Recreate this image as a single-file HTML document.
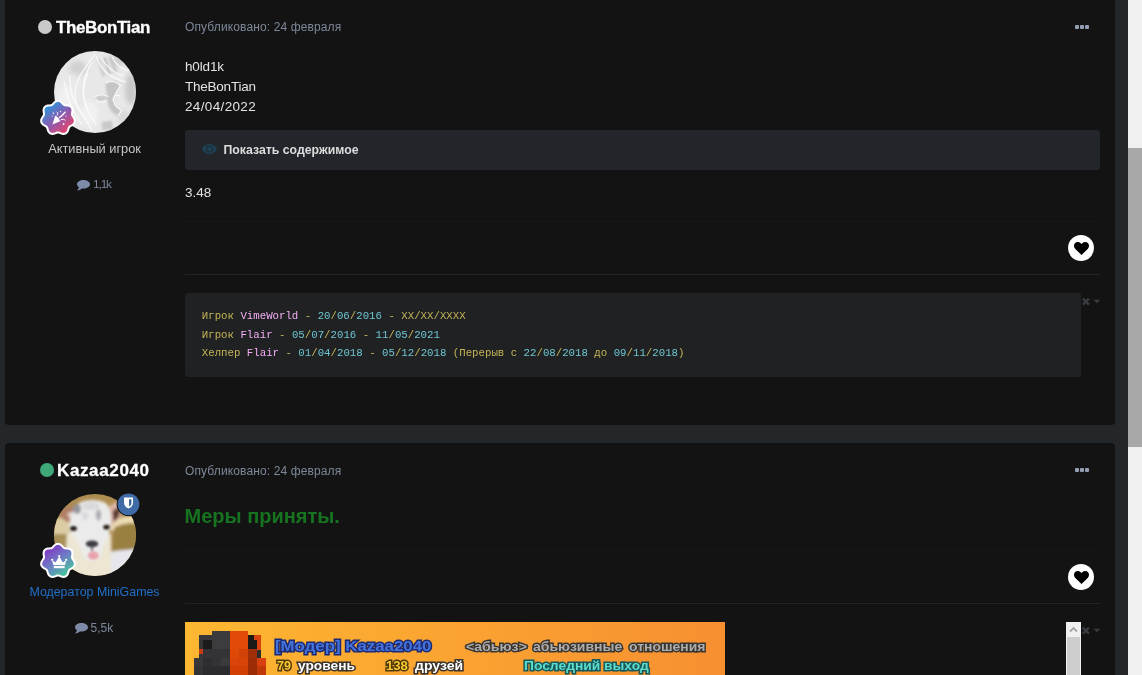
<!DOCTYPE html>
<html lang="ru">
<head>
<meta charset="utf-8">
<title>Forum</title>
<style>
*{box-sizing:border-box;margin:0;padding:0}
html,body{width:1142px;height:675px;overflow:hidden;background:#23272a;font-family:"Liberation Sans",sans-serif;color:#e0e0e0}
#root{position:absolute;left:0;top:0;width:1142px;height:675px;overflow:hidden;will-change:transform}
.abs{position:absolute}
.panel{position:absolute;left:5px;width:1110px;background:#131313}
#p1{top:-10px;height:435px;border-radius:0 0 4px 4px}
#p2{top:443px;height:260px;border-radius:4px 4px 0 0}
.sbar{position:absolute;left:1128px;top:0;width:14px;height:675px;background:#f0f0f0}
.sbar .thumb{position:absolute;left:0;top:148px;width:14px;height:299px;background:#a8a8a8}
.uname{position:absolute;font-weight:bold;color:#fff;-webkit-text-stroke:.3px #fff;font-size:17px;line-height:20px;white-space:nowrap}
.dot{position:absolute;width:14px;height:14px;border-radius:50%}
.pub{position:absolute;left:185px;letter-spacing:.12px;font-size:12px;line-height:16px;color:#7d8799;white-space:nowrap}
.txt{position:absolute;left:185px;font-size:13.5px;line-height:20px;color:#e2e2e2;white-space:nowrap}
.rank{position:absolute;left:14px;width:160px;text-align:center;font-size:12.8px;line-height:16px;white-space:nowrap}
.cnt{position:absolute;font-size:12px;line-height:14px;color:#7d8799;white-space:nowrap}
.hr{position:absolute;left:185px;width:915px;height:1px;background:#242424}
.heart{position:absolute;left:1068px;width:26px;height:26px;border-radius:50%;background:#fff}
.heart svg{position:absolute;left:5.6px;top:6.8px;width:15px;height:13px}
.dots{position:absolute;left:1075px;width:15px;height:4px}
.dots i{position:absolute;top:0;width:4.2px;height:4.2px;background:#949eb3;border-radius:1px}
.spoiler{position:absolute;left:185px;top:130px;width:915px;height:40px;background:#22262a;border-radius:3px}
.spoiler span{position:absolute;left:38.5px;top:13px;font-size:12.3px;line-height:14px;font-weight:bold;color:#dcdcdc;white-space:nowrap}
.code{position:absolute;left:185px;top:293px;width:896px;height:84px;background:#1f2123;border-radius:3px;font-family:"Liberation Mono",monospace;font-size:10.73px;line-height:18.7px;padding:14px 16.8px;white-space:pre}
.y{color:#c4b556}.p{color:#f5aef5}.c{color:#6fc6d2}
.avatar{position:absolute;width:82px;height:82px;border-radius:50%;overflow:hidden}
.xdd{position:absolute;left:1082px;width:19px;height:8px}
.bn{position:absolute;font-weight:bold;white-space:nowrap;font-size:14px;line-height:16px;-webkit-text-stroke:2.8px #2a2a2a;paint-order:stroke fill}
</style>
</head>
<body>
<div id="root">
<div class="panel" id="p1"></div>
<div class="panel" id="p2"></div>

<!-- POST 1 -->
<div class="dot" style="left:38px;top:20px;background:#c9c9c9"></div>
<div class="uname" style="left:56px;top:18px;letter-spacing:-0.39px">TheBonTian</div>
<div class="pub" style="top:19px">Опубликовано: 24 февраля</div>
<div class="dots" style="top:25px"><i style="left:0"></i><i style="left:5.1px"></i><i style="left:10.2px"></i></div>

<div class="avatar" id="av1" style="left:53.5px;top:51px">
<svg width="82" height="82" viewBox="0 0 82 82">
<defs><filter id="b1" x="-50%" y="-50%" width="200%" height="200%"><feGaussianBlur stdDeviation="1.1"/></filter><filter id="b1b" x="-50%" y="-50%" width="200%" height="200%"><feGaussianBlur stdDeviation="2.6"/></filter></defs>
<rect width="82" height="82" fill="#e8e8e8"/>
<g filter="url(#b1b)">
<ellipse cx="24" cy="17" rx="9" ry="7" fill="#d0d0d0"/>
<ellipse cx="77" cy="38" rx="6" ry="16" fill="#c8c8c8"/>
<ellipse cx="64" cy="10" rx="8" ry="5" fill="#cfcfcf"/>
<ellipse cx="12" cy="50" rx="9" ry="16" fill="#f0f0f0"/>
<ellipse cx="36" cy="62" rx="9" ry="12" fill="#f1f1f1"/>
<ellipse cx="70" cy="66" rx="7" ry="7" fill="#dadada"/>
</g>
<g filter="url(#b1)">
<path d="M51.4 32 L61.5 30.1 L66.5 34.5 L62.7 40.8 L59 48.4 L61.5 54.7 L67.8 59.7 L64 64.700 L57.7 61 L53.9 53.4 L52.7 43.3 Z" fill="#c5c5c5"/>
<path d="M41.5 45.5 Q47 42.5 53.5 45.5 Q50 51 44 50 Z" fill="#cbcbcb"/>
<path d="M47.6 71 L58 69.8 L59 78.6 L48 79 Z" fill="#c9c9c9"/>
<path d="M48.500 7 L51.500 6 L57.500 23 L54.500 24 Z" fill="#c2c2c2"/>
<path d="M54.500 6 L57.500 5.500 L63.500 21 L60.500 22.500 Z" fill="#c6c6c6"/>
<path d="M43 9 L46 8 L51.500 25 L48.500 26 Z" fill="#cccccc"/>
</g>
<g fill="none" stroke="#fcfcfc" stroke-width="1.100" opacity=".95">
<path d="M41 3 C32 16 20 28 21 46 C22 58 32 66 38 80"/>
<path d="M42 5 C46 18 56 27 72 31"/>
<path d="M38 12 C30 24 27 38 31 52 C33 60 38 66 42 74"/>
<path d="M40.500 45.800 Q47 41.800 54.500 45.500 M42 49.500 Q47 52.500 52.500 50"/>
<path d="M60 45.500 Q63 43.500 66 45"/>
<path d="M10 30 C12 46 18 60 28 74"/>
<path d="M47 6 C52 16 60 22 70 25"/>
<path d="M34 22 C29 34 28 46 33 56"/>
<path d="M51.400 32 C56 29 62 30 66.500 34.500 L62.700 40.800 L59 48.400 L61.500 54.700 L67.800 59.700 L64 64.700"/>
<path d="M16 24 C15 40 20 54 30 66"/>
<path d="M58 6 C62 14 68 18 74 20"/>
</g>
</svg>
</div>
<svg class="abs" style="left:40.4px;top:99.6px" width="36" height="36" viewBox="0 0 36 36">
<defs><linearGradient id="g1" x1="0.15" y1="0.1" x2="0.85" y2="0.95"><stop offset="0" stop-color="#2596dc"/><stop offset=".5" stop-color="#8a5cb0"/><stop offset="1" stop-color="#ee4266"/></linearGradient></defs>
<path d="M18.00 1.80 L18.72 1.88 L19.43 2.13 L20.10 2.52 L20.72 3.01 L21.29 3.57 L21.82 4.15 L22.32 4.71 L22.80 5.20 L23.29 5.62 L23.81 5.93 L24.38 6.14 L25.01 6.27 L25.70 6.34 L26.44 6.38 L27.23 6.43 L28.02 6.53 L28.80 6.71 L29.52 6.99 L30.15 7.39 L30.67 7.90 L31.05 8.52 L31.30 9.22 L31.41 9.99 L31.41 10.78 L31.33 11.58 L31.21 12.35 L31.09 13.09 L31.00 13.78 L30.98 14.42 L31.06 15.02 L31.25 15.60 L31.54 16.17 L31.92 16.75 L32.35 17.36 L32.80 18.00 L33.22 18.68 L33.56 19.40 L33.79 20.14 L33.87 20.88 L33.79 21.60 L33.55 22.29 L33.15 22.92 L32.63 23.49 L32.01 23.99 L31.33 24.42 L30.65 24.81 L30.00 25.17 L29.41 25.53 L28.90 25.92 L28.48 26.35 L28.14 26.86 L27.88 27.45 L27.66 28.10 L27.45 28.82 L27.23 29.57 L26.95 30.32 L26.61 31.04 L26.17 31.68 L25.64 32.21 L25.03 32.60 L24.34 32.83 L23.60 32.92 L22.83 32.86 L22.05 32.68 L21.29 32.43 L20.57 32.14 L19.88 31.85 L19.23 31.61 L18.60 31.45 L18.00 31.40 L17.40 31.45 L16.77 31.61 L16.12 31.85 L15.43 32.14 L14.71 32.43 L13.95 32.68 L13.17 32.86 L12.40 32.92 L11.66 32.83 L10.97 32.60 L10.36 32.21 L9.83 31.68 L9.39 31.04 L9.05 30.32 L8.77 29.57 L8.55 28.82 L8.34 28.10 L8.12 27.45 L7.86 26.86 L7.52 26.35 L7.10 25.92 L6.59 25.53 L6.00 25.17 L5.35 24.81 L4.67 24.42 L3.99 23.99 L3.37 23.49 L2.85 22.92 L2.45 22.29 L2.21 21.60 L2.13 20.88 L2.21 20.14 L2.44 19.40 L2.78 18.68 L3.20 18.00 L3.65 17.36 L4.08 16.75 L4.46 16.17 L4.75 15.60 L4.94 15.02 L5.02 14.42 L5.00 13.78 L4.91 13.09 L4.79 12.35 L4.67 11.58 L4.59 10.78 L4.59 9.99 L4.70 9.22 L4.95 8.52 L5.33 7.90 L5.85 7.39 L6.48 6.99 L7.20 6.71 L7.98 6.53 L8.77 6.43 L9.56 6.38 L10.30 6.34 L10.99 6.27 L11.62 6.14 L12.19 5.93 L12.71 5.62 L13.20 5.20 L13.68 4.71 L14.18 4.15 L14.71 3.57 L15.28 3.01 L15.90 2.52 L16.57 2.13 L17.28 1.88 Z" fill="#fff" stroke="#fff" stroke-width="4" stroke-linejoin="round"/><path d="M18.00 1.80 L18.72 1.88 L19.43 2.13 L20.10 2.52 L20.72 3.01 L21.29 3.57 L21.82 4.15 L22.32 4.71 L22.80 5.20 L23.29 5.62 L23.81 5.93 L24.38 6.14 L25.01 6.27 L25.70 6.34 L26.44 6.38 L27.23 6.43 L28.02 6.53 L28.80 6.71 L29.52 6.99 L30.15 7.39 L30.67 7.90 L31.05 8.52 L31.30 9.22 L31.41 9.99 L31.41 10.78 L31.33 11.58 L31.21 12.35 L31.09 13.09 L31.00 13.78 L30.98 14.42 L31.06 15.02 L31.25 15.60 L31.54 16.17 L31.92 16.75 L32.35 17.36 L32.80 18.00 L33.22 18.68 L33.56 19.40 L33.79 20.14 L33.87 20.88 L33.79 21.60 L33.55 22.29 L33.15 22.92 L32.63 23.49 L32.01 23.99 L31.33 24.42 L30.65 24.81 L30.00 25.17 L29.41 25.53 L28.90 25.92 L28.48 26.35 L28.14 26.86 L27.88 27.45 L27.66 28.10 L27.45 28.82 L27.23 29.57 L26.95 30.32 L26.61 31.04 L26.17 31.68 L25.64 32.21 L25.03 32.60 L24.34 32.83 L23.60 32.92 L22.83 32.86 L22.05 32.68 L21.29 32.43 L20.57 32.14 L19.88 31.85 L19.23 31.61 L18.60 31.45 L18.00 31.40 L17.40 31.45 L16.77 31.61 L16.12 31.85 L15.43 32.14 L14.71 32.43 L13.95 32.68 L13.17 32.86 L12.40 32.92 L11.66 32.83 L10.97 32.60 L10.36 32.21 L9.83 31.68 L9.39 31.04 L9.05 30.32 L8.77 29.57 L8.55 28.82 L8.34 28.10 L8.12 27.45 L7.86 26.86 L7.52 26.35 L7.10 25.92 L6.59 25.53 L6.00 25.17 L5.35 24.81 L4.67 24.42 L3.99 23.99 L3.37 23.49 L2.85 22.92 L2.45 22.29 L2.21 21.60 L2.13 20.88 L2.21 20.14 L2.44 19.40 L2.78 18.68 L3.20 18.00 L3.65 17.36 L4.08 16.75 L4.46 16.17 L4.75 15.60 L4.94 15.02 L5.02 14.42 L5.00 13.78 L4.91 13.09 L4.79 12.35 L4.67 11.58 L4.59 10.78 L4.59 9.99 L4.70 9.22 L4.95 8.52 L5.33 7.90 L5.85 7.39 L6.48 6.99 L7.20 6.71 L7.98 6.53 L8.77 6.43 L9.56 6.38 L10.30 6.34 L10.99 6.27 L11.62 6.14 L12.19 5.93 L12.71 5.62 L13.20 5.20 L13.68 4.71 L14.18 4.15 L14.71 3.57 L15.28 3.01 L15.90 2.52 L16.57 2.13 L17.28 1.88 Z" fill="url(#g1)"/>
<g fill="#fff">
<path d="M12.4 24.6 L15.3 15.6 Q18.6 17.2 20.2 21.2 Z"/>
<circle cx="13.4" cy="13.2" r=".8"/><circle cx="12.2" cy="16" r=".6"/><circle cx="23.6" cy="24" r=".9"/><circle cx="26" cy="16" r=".6"/><circle cx="20.4" cy="11.6" r=".7"/>
<path d="M17 15.5 C18.4 14 17.6 12.6 16.6 11.8" fill="none" stroke="#fff" stroke-width="1"/>
<path d="M19 17.6 C22 16.6 23 14 25.6 11.8" fill="none" stroke="#fff" stroke-width="1.3"/>
<path d="M20.6 20 C22.6 18.8 24.4 19.2 25.4 20.6" fill="none" stroke="#fff" stroke-width="1"/>
</g>
</svg>
<div class="rank" style="top:141px;left:14.6px;color:#c6c6c6">Активный игрок</div>
<svg class="abs" style="left:77px;top:179.5px" width="13" height="11" viewBox="0 0 13 11"><path d="M6.5 0 C10.1 0 13 1.9 13 4.3 C13 6.7 10.1 8.6 6.5 8.6 C5.9 8.6 5.4 8.55 4.9 8.45 C3.7 9.6 2.2 10.2 .6 10.4 C.3 10.4 .2 10.1 .4 9.9 C1.2 9.1 1.8 8.2 2 7.3 C.8 6.5 0 5.5 0 4.3 C0 1.9 2.9 0 6.5 0 Z" fill="#7d8aa8"/></svg>
<div class="cnt" style="left:93px;top:177px;letter-spacing:-1.1px;font-size:11.8px">1,1k</div>

<div class="txt" style="top:56.5px;letter-spacing:-.15px">h0ld1k</div>
<div class="txt" style="top:76.5px;letter-spacing:-.23px">TheBonTian</div>
<div class="txt" style="top:96.5px;letter-spacing:.35px">24/04/2022</div>
<div class="spoiler">
<svg class="abs" style="left:17.2px;top:14.4px" width="15" height="10" viewBox="0 0 15 10"><path d="M7.5 0 C11 0 13.8 2.4 15 5 C13.8 7.6 11 10 7.5 10 C4 10 1.200 7.600 0 5 C1.200 2.400 4 0 7.500 0 Z M7.500 1.500 A3.500 3.500 0 1 0 7.500 8.500 A3.500 3.500 0 1 0 7.500 1.500 Z" fill="#1d4256" fill-rule="evenodd"/><circle cx="7.500" cy="5" r="2.500" fill="#1d4256"/></svg>
<span>Показать содержимое</span></div>
<div class="txt" style="top:182.5px">3.48</div>
<div class="heart" style="top:235px"><svg viewBox="0 0 15 13"><path d="M7.500 13 L1.300 6.900 C-.4 5.200 -.4 2.600 1.100 1.100 C2.700 -.4 5.200 -.3 6.700 1.300 L7.500 2.100 L8.300 1.300 C9.800 -.3 12.300 -.4 13.900 1.100 C15.400 2.600 15.400 5.200 13.700 6.900 Z" fill="#000"/></svg></div>
<div class="hr" style="top:221px;background:#171717"></div>
<div class="hr" style="top:274px"></div>
<div class="code"><span class="y">Игрок</span> <span class="p">VimeWorld</span> <span class="y">-</span> <span class="c">20</span><span class="y">/</span><span class="c">06</span><span class="y">/</span><span class="c">2016</span> <span class="y">-</span> <span class="y">XX/XX/XXXX</span>
<span class="y">Игрок</span> <span class="p">Flair</span> <span class="y">-</span> <span class="c">05</span><span class="y">/</span><span class="c">07</span><span class="y">/</span><span class="c">2016</span> <span class="y">-</span> <span class="c">11</span><span class="y">/</span><span class="c">05</span><span class="y">/</span><span class="c">2021</span>
<span class="y">Хелпер</span> <span class="p">Flair</span> <span class="y">-</span> <span class="c">01</span><span class="y">/</span><span class="c">04</span><span class="y">/</span><span class="c">2018</span> <span class="y">-</span> <span class="c">05</span><span class="y">/</span><span class="c">12</span><span class="y">/</span><span class="c">2018</span> <span class="y">(Перерыв с</span> <span class="c">22</span><span class="y">/</span><span class="c">08</span><span class="y">/</span><span class="c">2018</span> <span class="y">до</span> <span class="c">09</span><span class="y">/</span><span class="c">11</span><span class="y">/</span><span class="c">2018</span><span class="y">)</span></div>
<svg class="xdd" style="top:297.5px" viewBox="0 0 19 8"><path d="M.9 .6 L6.900 6.600 M6.900 .6 L.9 6.600" stroke="#393d41" stroke-width="2.300" fill="none"/><path d="M11.600 1.700 L18.200 1.700 L14.900 5.200 Z" fill="#393d41"/></svg>

<!-- POST 2 -->
<div class="dot" style="left:39.8px;top:463px;background:#3fa878"></div>
<div class="uname" style="left:57px;top:461px;letter-spacing:.63px">Kazaa2040</div>
<div class="pub" style="top:463px">Опубликовано: 24 февраля</div>
<div class="dots" style="top:468px"><i style="left:0"></i><i style="left:5.1px"></i><i style="left:10.2px"></i></div>

<div class="avatar" id="av2" style="left:53.5px;top:493.5px">
<svg width="82" height="82" viewBox="0 0 82 82">
<defs><filter id="b2" x="-50%" y="-50%" width="200%" height="200%"><feGaussianBlur stdDeviation="1.500"/></filter><filter id="b3" x="-50%" y="-50%" width="200%" height="200%"><feGaussianBlur stdDeviation=".8"/></filter></defs>
<rect width="82" height="82" fill="#ae8c50"/>
<g filter="url(#b2)">
<rect x="-5" y="24" width="24" height="18" fill="#dccca4"/>
<rect x="-5" y="40" width="18" height="20" fill="#a89058"/>
<rect x="-5" y="58" width="30" height="30" fill="#d8cca8"/>
<path d="M56 36 C57 26 68 21 86 22 L86 30 C72 28 64 30 62 38 Z" fill="#eddcb4"/>
<path d="M60 34 C64 30 74 29 88 30 L88 56 L58 56 Z" fill="#9a8040"/>
<path d="M52 58 L90 54 L90 90 L44 90 Z" fill="#e6e6ec"/>
<path d="M5 20 C9 12 20 11 27 16 L25 30 C17 30 9 28 5 20 Z" fill="#b07e66"/>
<path d="M13 20 C17 17 21 18 25 20 L24 28 C19 27 16 25 13 20 Z" fill="#e2d4ca"/>
<path d="M52 20 C55 10 62 6 69 9 C70 19 65 28 56 31 Z" fill="#dcb6a6"/>
<path d="M58.500 18 C61 14 64.500 13 66.500 14.500 C66.500 21 63 26 59.500 27.500 Z" fill="#5a3a2e"/>
<path d="M13 40 C20 36 50 36 57 40 L57 90 L10 90 Z" fill="#ece6d2"/>
<path d="M25 9 C32 5 46 5 53 10 C58 18 58 30 55 38 C52 46 49 52 48 58 C47 64 43 67 38 67 C33 67 29 64 28 58 C27 52 22 46 17 38 C13 30 18 16 25 9 Z" fill="#ebebeb"/>
<ellipse cx="37" cy="12" rx="9" ry="4" fill="#d9d9dc"/>

<ellipse cx="23" cy="15" rx="4" ry="5" fill="#93939b"/>
<ellipse cx="44.500" cy="21" rx="2.600" ry="5.500" fill="#a6a6ae"/>
<ellipse cx="31" cy="22" rx="3" ry="4" fill="#d6d6da"/>
</g>
<g filter="url(#b3)">
<ellipse cx="19.500" cy="34.500" rx="3.400" ry="2.500" fill="#2c221c"/>
<ellipse cx="52.500" cy="33.200" rx="3.200" ry="2.400" fill="#2c221c"/>
<ellipse cx="38" cy="49.800" rx="6.300" ry="3.400" fill="#3c3c44"/>
<path d="M38 52 L38 57" stroke="#55555c" stroke-width="1.600"/>
<ellipse cx="39.300" cy="61.500" rx="5.400" ry="4" fill="#e9a0aa"/>
</g>
</svg>
</div>
<svg class="abs" style="left:116px;top:492px" width="25" height="25" viewBox="-1 -1 25 25"><circle cx="11.500" cy="11.300" r="11.900" fill="#131313"/><circle cx="11.500" cy="11.300" r="10.900" fill="#3f6ba6"/><path d="M7 4.600 L16 4.600 L16 9.800 C16 12.800 13.700 14.700 11.500 15.600 C9.300 14.700 7 12.800 7 9.800 Z" fill="#fff"/><path d="M12.100 6.300 L14.400 6.300 L14.400 9.900 C14.400 11.500 13.400 12.700 12.100 13.400 Z" fill="#345a90"/></svg>
<svg class="abs" style="left:40.300px;top:543px" width="36" height="36" viewBox="0 0 36 36">
<defs><linearGradient id="g2" x1="0.200" y1="0.100" x2="0.800" y2="0.950"><stop offset="0" stop-color="#8238c6"/><stop offset=".5" stop-color="#6c80c4"/><stop offset="1" stop-color="#46c69a"/></linearGradient></defs>
<path d="M18.00 1.80 L18.72 1.88 L19.43 2.13 L20.10 2.52 L20.72 3.01 L21.29 3.57 L21.82 4.15 L22.32 4.71 L22.80 5.20 L23.29 5.62 L23.81 5.93 L24.38 6.14 L25.01 6.27 L25.70 6.34 L26.44 6.38 L27.23 6.43 L28.02 6.53 L28.80 6.71 L29.52 6.99 L30.15 7.39 L30.67 7.90 L31.05 8.52 L31.30 9.22 L31.41 9.99 L31.41 10.78 L31.33 11.58 L31.21 12.35 L31.09 13.09 L31.00 13.78 L30.98 14.42 L31.06 15.02 L31.25 15.60 L31.54 16.17 L31.92 16.75 L32.35 17.36 L32.80 18.00 L33.22 18.68 L33.56 19.40 L33.79 20.14 L33.87 20.88 L33.79 21.60 L33.55 22.29 L33.15 22.92 L32.63 23.49 L32.01 23.99 L31.33 24.42 L30.65 24.81 L30.00 25.17 L29.41 25.53 L28.90 25.92 L28.48 26.35 L28.14 26.86 L27.88 27.45 L27.66 28.10 L27.45 28.82 L27.23 29.57 L26.95 30.32 L26.61 31.04 L26.17 31.68 L25.64 32.21 L25.03 32.60 L24.34 32.83 L23.60 32.92 L22.83 32.86 L22.05 32.68 L21.29 32.43 L20.57 32.14 L19.88 31.85 L19.23 31.61 L18.60 31.45 L18.00 31.40 L17.40 31.45 L16.77 31.61 L16.12 31.85 L15.43 32.14 L14.71 32.43 L13.95 32.68 L13.17 32.86 L12.40 32.92 L11.66 32.83 L10.97 32.60 L10.36 32.21 L9.83 31.68 L9.39 31.04 L9.05 30.32 L8.77 29.57 L8.55 28.82 L8.34 28.10 L8.12 27.45 L7.86 26.86 L7.52 26.35 L7.10 25.92 L6.59 25.53 L6.00 25.17 L5.35 24.81 L4.67 24.42 L3.99 23.99 L3.37 23.49 L2.85 22.92 L2.45 22.29 L2.21 21.60 L2.13 20.88 L2.21 20.14 L2.44 19.40 L2.78 18.68 L3.20 18.00 L3.65 17.36 L4.08 16.75 L4.46 16.17 L4.75 15.60 L4.94 15.02 L5.02 14.42 L5.00 13.78 L4.91 13.09 L4.79 12.35 L4.67 11.58 L4.59 10.78 L4.59 9.99 L4.70 9.22 L4.95 8.52 L5.33 7.90 L5.85 7.39 L6.48 6.99 L7.20 6.71 L7.98 6.53 L8.77 6.43 L9.56 6.38 L10.30 6.34 L10.99 6.27 L11.62 6.14 L12.19 5.93 L12.71 5.62 L13.20 5.20 L13.68 4.71 L14.18 4.15 L14.71 3.57 L15.28 3.01 L15.90 2.52 L16.57 2.13 L17.28 1.88 Z" fill="#fff" stroke="#fff" stroke-width="4" stroke-linejoin="round"/><path d="M18.00 1.80 L18.72 1.88 L19.43 2.13 L20.10 2.52 L20.72 3.01 L21.29 3.57 L21.82 4.15 L22.32 4.71 L22.80 5.20 L23.29 5.62 L23.81 5.93 L24.38 6.14 L25.01 6.27 L25.70 6.34 L26.44 6.38 L27.23 6.43 L28.02 6.53 L28.80 6.71 L29.52 6.99 L30.15 7.39 L30.67 7.90 L31.05 8.52 L31.30 9.22 L31.41 9.99 L31.41 10.78 L31.33 11.58 L31.21 12.35 L31.09 13.09 L31.00 13.78 L30.98 14.42 L31.06 15.02 L31.25 15.60 L31.54 16.17 L31.92 16.75 L32.35 17.36 L32.80 18.00 L33.22 18.68 L33.56 19.40 L33.79 20.14 L33.87 20.88 L33.79 21.60 L33.55 22.29 L33.15 22.92 L32.63 23.49 L32.01 23.99 L31.33 24.42 L30.65 24.81 L30.00 25.17 L29.41 25.53 L28.90 25.92 L28.48 26.35 L28.14 26.86 L27.88 27.45 L27.66 28.10 L27.45 28.82 L27.23 29.57 L26.95 30.32 L26.61 31.04 L26.17 31.68 L25.64 32.21 L25.03 32.60 L24.34 32.83 L23.60 32.92 L22.83 32.86 L22.05 32.68 L21.29 32.43 L20.57 32.14 L19.88 31.85 L19.23 31.61 L18.60 31.45 L18.00 31.40 L17.40 31.45 L16.77 31.61 L16.12 31.85 L15.43 32.14 L14.71 32.43 L13.95 32.68 L13.17 32.86 L12.40 32.92 L11.66 32.83 L10.97 32.60 L10.36 32.21 L9.83 31.68 L9.39 31.04 L9.05 30.32 L8.77 29.57 L8.55 28.82 L8.34 28.10 L8.12 27.45 L7.86 26.86 L7.52 26.35 L7.10 25.92 L6.59 25.53 L6.00 25.17 L5.35 24.81 L4.67 24.42 L3.99 23.99 L3.37 23.49 L2.85 22.92 L2.45 22.29 L2.21 21.60 L2.13 20.88 L2.21 20.14 L2.44 19.40 L2.78 18.68 L3.20 18.00 L3.65 17.36 L4.08 16.75 L4.46 16.17 L4.75 15.60 L4.94 15.02 L5.02 14.42 L5.00 13.78 L4.91 13.09 L4.79 12.35 L4.67 11.58 L4.59 10.78 L4.59 9.99 L4.70 9.22 L4.95 8.52 L5.33 7.90 L5.85 7.39 L6.48 6.99 L7.20 6.71 L7.98 6.53 L8.77 6.43 L9.56 6.38 L10.30 6.34 L10.99 6.27 L11.62 6.14 L12.19 5.93 L12.71 5.62 L13.20 5.20 L13.68 4.71 L14.18 4.15 L14.71 3.57 L15.28 3.01 L15.90 2.52 L16.57 2.13 L17.28 1.88 Z" fill="url(#g2)"/>
<g fill="#fff" transform="translate(.9 0)"><path d="M11.300 17.200 L14.600 19.600 L18.300 13.600 L22 19.600 L25.300 17.200 L24.200 22.100 L12.400 22.100 Z"/><rect x="12.900" y="22.900" width="10.800" height="2.300"/><circle cx="11.300" cy="16.800" r="1.100"/><circle cx="18.300" cy="13.200" r="1.100"/><circle cx="25.300" cy="16.800" r="1.100"/></g>
</svg>
<div class="rank" style="top:584px;left:14.500px;color:#216fc8;font-size:12.400px">Модератор MiniGames</div>
<svg class="abs" style="left:74.900px;top:622.700px" width="13" height="11" viewBox="0 0 13 11"><path d="M6.500 0 C10.100 0 13 1.900 13 4.300 C13 6.700 10.100 8.600 6.500 8.600 C5.900 8.600 5.400 8.550 4.900 8.450 C3.700 9.600 2.200 10.200 .6 10.400 C.3 10.400 .2 10.100 .4 9.900 C1.200 9.100 1.800 8.200 2 7.300 C.8 6.500 0 5.500 0 4.300 C0 1.900 2.900 0 6.500 0 Z" fill="#7d8aa8"/></svg>
<div class="cnt" style="left:90.500px;top:621px">5,5k</div>

<div class="abs" style="left:184.500px;top:502.500px;font-size:20px;line-height:26px;font-weight:bold;color:#16731f;white-space:nowrap">Меры приняты.</div>
<div class="heart" style="top:564px"><svg viewBox="0 0 15 13"><path d="M7.500 13 L1.300 6.900 C-.4 5.200 -.4 2.600 1.100 1.100 C2.700 -.4 5.200 -.3 6.700 1.300 L7.500 2.100 L8.300 1.300 C9.800 -.3 12.300 -.4 13.900 1.100 C15.400 2.600 15.400 5.200 13.700 6.900 Z" fill="#000"/></svg></div>
<div class="hr" style="top:550px;background:#171717"></div>
<div class="hr" style="top:603px"></div>

<!-- banner -->
<div class="abs" id="banner" style="left:185px;top:622px;width:540px;height:60px;background:linear-gradient(90deg,#fdb731,#f78f31);overflow:hidden">
<svg class="abs" style="left:0;top:0" width="100" height="60" viewBox="0 0 100 60" shape-rendering="crispEdges"><rect x="27.31" y="8.76" width="17.91" height="4.52" fill="#3b3b3d"/><rect x="45.18" y="8.76" width="17.91" height="4.52" fill="#e14a08"/><rect x="13.92" y="13.23" width="13.45" height="4.52" fill="#38383a"/><rect x="27.31" y="13.23" width="17.91" height="4.52" fill="#3b3b3d"/><rect x="45.18" y="13.23" width="17.91" height="4.52" fill="#e14a08"/><rect x="63.04" y="13.23" width="5.57" height="4.52" fill="#1e1a18"/><rect x="68.56" y="13.23" width="7.93" height="4.52" fill="#d8420c"/><rect x="13.92" y="17.69" width="4.52" height="8.98" fill="#343436"/><rect x="18.38" y="17.69" width="8.98" height="8.98" fill="#1b1b1b"/><rect x="27.31" y="17.69" width="17.91" height="8.98" fill="#3c3c3e"/><rect x="45.18" y="17.69" width="17.91" height="8.98" fill="#e14a08"/><rect x="63.04" y="17.69" width="8.98" height="8.98" fill="#1c1816"/><rect x="71.97" y="17.69" width="4.52" height="8.98" fill="#d8420c"/><rect x="13.92" y="26.63" width="4.52" height="8.98" fill="#c83c10"/><rect x="18.38" y="26.63" width="26.85" height="8.98" fill="#343436"/><rect x="45.18" y="26.63" width="8.98" height="8.98" fill="#e04808"/><rect x="54.11" y="26.63" width="8.98" height="8.98" fill="#d04208"/><rect x="63.04" y="26.63" width="8.98" height="8.98" fill="#a02e06"/><rect x="71.97" y="26.63" width="4.52" height="1.89" fill="#d8420c"/><rect x="71.97" y="28.47" width="4.52" height="7.14" fill="#2c2c2c"/><rect x="13.92" y="32.41" width="4.52" height="3.20" fill="#38383a"/><rect x="9.45" y="35.56" width="8.98" height="19.23" fill="#38383a"/><rect x="18.38" y="35.56" width="8.98" height="19.23" fill="#2e2e30"/><rect x="27.31" y="35.56" width="8.98" height="19.23" fill="#333335"/><rect x="36.25" y="35.56" width="8.98" height="19.23" fill="#3a3a3c"/><rect x="45.18" y="35.56" width="8.98" height="19.23" fill="#da4408"/><rect x="54.11" y="35.56" width="8.98" height="19.23" fill="#d84408"/><rect x="63.04" y="35.56" width="8.98" height="19.23" fill="#9c2c04"/><rect x="71.97" y="35.56" width="8.98" height="19.23" fill="#d84010"/><rect x="9.45" y="44.49" width="35.78" height="10.30" fill="#2c2c2e"/><rect x="45.18" y="44.49" width="17.91" height="10.30" fill="#d23e06"/><rect x="71.97" y="44.49" width="8.98" height="10.30" fill="#c03808"/><rect x="9.45" y="44.49" width="8.98" height="10.30" fill="#343436"/></svg>
<div class="bn" style="left:90.4px;top:16.1px;color:#4473dc;-webkit-text-stroke-color:#1b2a72;font-size:15px;transform:scaleX(1.122);transform-origin:0 0">[Модер] Kazaa2040</div>
<div class="bn" style="left:92.0px;top:36px;color:#f8c832;-webkit-text-stroke-color:#4e380a;font-size:12px;transform:scaleX(1.048);transform-origin:0 0">79</div>
<div class="bn" style="left:113.0px;top:36px;color:#ffffff;-webkit-text-stroke-color:#3a342c;font-size:12px;transform:scaleX(1.145);transform-origin:0 0">уровень</div>
<div class="bn" style="left:200.6px;top:36px;color:#f8c832;-webkit-text-stroke-color:#4e380a;font-size:12px;transform:scaleX(1.093);transform-origin:0 0">138</div>
<div class="bn" style="left:229.5px;top:36px;color:#ffffff;-webkit-text-stroke-color:#3a342c;font-size:12px;transform:scaleX(1.168);transform-origin:0 0">друзей</div>
<div class="bn" style="left:280.6px;top:16.6px;color:#adadad;-webkit-text-stroke-color:#38342f;font-size:13.5px;transform:scaleX(1.047);transform-origin:0 0">&lt;абьюз&gt;</div>
<div class="bn" style="left:348.0px;top:16.6px;color:#adadad;-webkit-text-stroke-color:#38342f;font-size:13.5px;transform:scaleX(1.035);transform-origin:0 0">абьюзивные</div>
<div class="bn" style="left:443.7px;top:16.6px;color:#adadad;-webkit-text-stroke-color:#38342f;font-size:13.5px;transform:scaleX(1.031);transform-origin:0 0">отношения</div>
<div class="bn" style="left:338.5px;top:35.9px;color:#5cdccc;-webkit-text-stroke-color:#17595a;font-size:12.5px;transform:scaleX(1.105);transform-origin:0 0">Последний выход</div>
</div>
<svg class="xdd" style="top:626.500px" viewBox="0 0 19 8"><path d="M.9 .6 L6.900 6.600 M6.900 .6 L.9 6.600" stroke="#393d41" stroke-width="2.300" fill="none"/><path d="M11.600 1.700 L18.200 1.700 L14.900 5.200 Z" fill="#393d41"/></svg>
<!-- inner scrollbar -->
<div class="abs" style="left:1066px;top:622px;width:15px;height:60px;background:#f0f0f0"></div><div class="abs" style="left:1067px;top:637px;width:13px;height:60px;background:#cdcdcd"></div>
<div class="abs" style="left:1066px;top:622px;width:15px;height:15px;background:#f0f0f0"></div>
<svg class="abs" style="left:1066px;top:622px" width="15" height="15" viewBox="0 0 15 15"><path d="M4 9.500 L7.500 6 L11 9.500" stroke="#a3a3a3" stroke-width="1.800" fill="none"/></svg>

<div class="sbar"><div class="thumb"></div></div>
</div>
</body>
</html>
